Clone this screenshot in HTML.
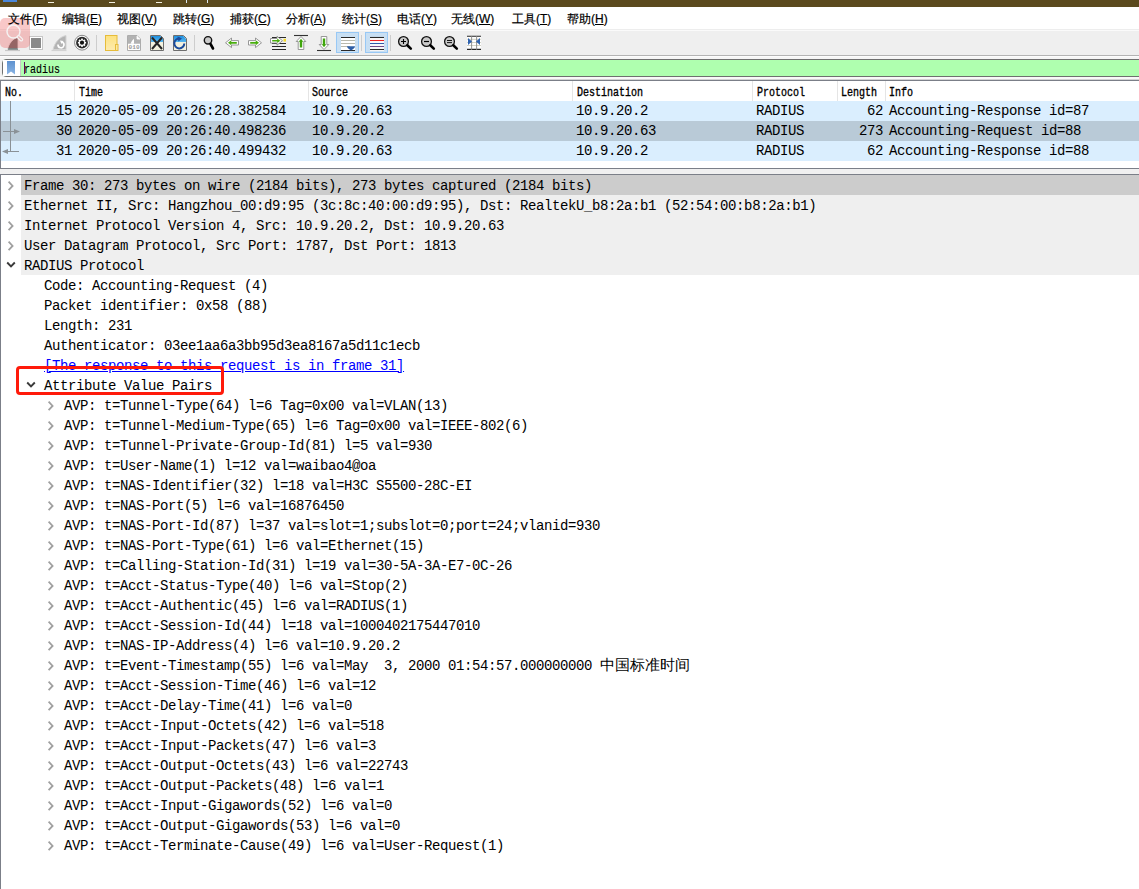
<!DOCTYPE html><html><head><meta charset="utf-8"><style>
*{margin:0;padding:0;box-sizing:border-box}
html,body{width:1139px;height:889px;overflow:hidden;background:#fff}
body{position:relative;font-family:"Liberation Sans", sans-serif}
.a{position:absolute}
.mono{font-family:"Liberation Mono", monospace;font-size:14px;letter-spacing:-0.4px;white-space:pre;color:#000}
.menu{font-family:"Liberation Sans", sans-serif;font-size:12px;color:#000;white-space:pre;z-index:10;-webkit-text-stroke:0.2px #000}
.menu u{text-decoration:underline}
.hdr{font-family:"Liberation Mono", monospace;font-size:12px;white-space:pre;color:#000;transform:scaleX(0.8333);transform-origin:0 0;-webkit-text-stroke:0.35px #000}
.row{position:absolute;height:20px;left:1px;right:0}
.cell{position:absolute;top:0;height:20px;line-height:20px}
</style></head><body><div class="a" style="left:0;top:0;width:1139px;height:7px;background:#5b4a1e"></div>
<div class="a" style="left:3px;top:0;width:14px;height:2px;background:#4a86d8"></div>
<div class="a" style="left:48px;top:2px;width:6px;height:1px;background:#f4f0e0"></div>
<div class="a" style="left:109px;top:2px;width:6px;height:1px;background:#f4f0e0"></div>
<div class="a" style="left:156px;top:2px;width:6px;height:1px;background:#f4f0e0"></div>
<div class="a" style="left:186px;top:0;width:1px;height:3px;background:#dce8f0"></div>
<div class="a" style="left:207px;top:0;width:1px;height:3px;background:#dce8f0"></div>
<div class="a" style="left:0;top:7px;width:1139px;height:22px;background:#fff"></div>
<div class="a menu" style="left:8px;top:11px;height:16px;line-height:16px">文件(<u>F</u>)</div>
<div class="a menu" style="left:62px;top:11px;height:16px;line-height:16px">编辑(<u>E</u>)</div>
<div class="a menu" style="left:117px;top:11px;height:16px;line-height:16px">视图(<u>V</u>)</div>
<div class="a menu" style="left:173px;top:11px;height:16px;line-height:16px">跳转(<u>G</u>)</div>
<div class="a menu" style="left:230px;top:11px;height:16px;line-height:16px">捕获(<u>C</u>)</div>
<div class="a menu" style="left:286px;top:11px;height:16px;line-height:16px">分析(<u>A</u>)</div>
<div class="a menu" style="left:342px;top:11px;height:16px;line-height:16px">统计(<u>S</u>)</div>
<div class="a menu" style="left:397px;top:11px;height:16px;line-height:16px">电话(<u>Y</u>)</div>
<div class="a menu" style="left:451px;top:11px;height:16px;line-height:16px">无线(<u>W</u>)</div>
<div class="a menu" style="left:512px;top:11px;height:16px;line-height:16px">工具(<u>T</u>)</div>
<div class="a menu" style="left:567px;top:11px;height:16px;line-height:16px">帮助(<u>H</u>)</div>
<div class="a" style="left:0;top:29px;width:1139px;height:1px;background:#ededed"></div>
<div class="a" style="left:0;top:30px;width:1139px;height:1px;background:#fafafa"></div>
<div class="a" style="left:0;top:31px;width:1139px;height:24px;background:#efefef"></div>
<div class="a" style="left:0;top:55px;width:1139px;height:1px;background:#b3b3b3"></div>
<svg class="a" style="left:0;top:0" width="500" height="56" viewBox="0 0 500 56">
<defs>
<linearGradient id="gfold" x1="0" y1="0" x2="0" y2="1"><stop offset="0" stop-color="#fde27e"/><stop offset="1" stop-color="#fdebb0"/></linearGradient>
<linearGradient id="gblue" x1="0" y1="0" x2="0" y2="1"><stop offset="0" stop-color="#1c8fe0"/><stop offset="1" stop-color="#5cb8f0"/></linearGradient>
</defs>
<!-- shark fin start (under overlay) -->
<path d="M5 50.5H20" stroke="#c8c8c8" stroke-width="1.2"/>
<path d="M7.5 49.2C9 43.5 12.5 38.8 18 37.2V49.2Z" fill="#5e5e5e" stroke="#e4e4e4" stroke-width="0.8"/><path d="M8 49.3H18" stroke="#7a8686" stroke-width="1"/>
<!-- stop -->
<rect x="29.5" y="36.5" width="13" height="13" fill="#fff" stroke="#c6c6c6"/>
<rect x="31" y="38" width="10" height="10" fill="#8a8a8a"/>
<!-- restart fin -->
<path d="M51.5 50.5H66.5" stroke="#d2d2d2" stroke-width="1.2"/>
<path d="M53 49.5C55 42 59.5 37 66 35.5V49.5Z" fill="#b4b4b4" stroke="#d4d4d4" stroke-width="1"/>
<path d="M58 44.5A3 3 0 1 0 62 42" fill="none" stroke="#fff" stroke-width="1.6"/>
<path d="M60 40.5L63.5 41L61.5 44Z" fill="#fff"/>
<!-- options gear -->
<circle cx="82" cy="42.7" r="7.4" fill="#fff" stroke="#7a7a7a" stroke-width="0.9"/>
<circle cx="82" cy="42.7" r="5.9" fill="#262626"/>
<g fill="#fff"><circle cx="82" cy="42.7" r="3.0"/>
<rect x="81.1" y="38.6" width="1.8" height="8.2"/><rect x="77.9" y="41.8" width="8.2" height="1.8"/>
<rect x="81.1" y="38.6" width="1.8" height="8.2" transform="rotate(45 82 42.7)"/><rect x="81.1" y="38.6" width="1.8" height="8.2" transform="rotate(-45 82 42.7)"/></g>
<circle cx="82" cy="42.7" r="2.1" fill="#111"/>
<!-- sep -->
<rect x="96" y="35" width="1" height="16" fill="#cdcdcd"/>
<!-- folder -->
<rect x="105.5" y="35.5" width="11.5" height="15" fill="url(#gfold)" stroke="#e6bc3a" stroke-width="1"/>
<rect x="115.5" y="44.5" width="2.5" height="6" fill="#fde8a0" stroke="#e6bc3a" stroke-width="1"/>
<!-- 010 file -->
<path d="M127.5 35.5H137L140.5 39V50.5H127.5Z" fill="#fff" stroke="#acacac"/>
<path d="M128 36H136.6L140 39.4V43.8H128Z" fill="#b2b2b2"/>
<path d="M137 36V39H140" fill="#fff" stroke="#fff" stroke-width="0.8"/>
<path d="M130.5 43.8C131.5 41.5 132.5 39.8 134 38.8V43.8Z" fill="#fff"/>
<text x="128.6" y="48.9" font-family="Liberation Mono" font-size="6" fill="#9a9a9a" font-weight="bold" textLength="11" lengthAdjust="spacingAndGlyphs" style="-webkit-font-smoothing:antialiased">010</text>
<!-- close file -->
<path d="M150.5 35.5H160.5L163.5 38.5V50.5H150.5Z" fill="#f3f1df" stroke="#6e6e6e"/>
<path d="M151 36H160.3L163 38.7V42H151Z" fill="url(#gblue)"/>
<path d="M152 37.5L162 49M162 37.5L152 49" stroke="#262626" stroke-width="2"/>
<!-- reload -->
<path d="M173.5 35.5H183.5L186.5 38.5V50.5H173.5Z" fill="#f3f1df" stroke="#6e6e6e"/>
<path d="M174 36H183.3L186 38.7V42H174Z" fill="url(#gblue)"/>
<path d="M180 38.5A5 5 0 1 0 184.3 43.5" fill="none" stroke="#1c4c9c" stroke-width="2"/>
<path d="M177.5 36.5L182 38.5L178.5 41.5Z" fill="#1c4c9c"/>
<!-- sep -->
<rect x="194" y="35" width="1" height="16" fill="#cdcdcd"/>
<!-- find -->
<circle cx="208" cy="40.3" r="3.7" fill="#cacaca" stroke="#111" stroke-width="1.4"/>
<path d="M210.5 44L213 48.5" stroke="#000" stroke-width="2.6" stroke-linecap="round"/>
<!-- prev arrow -->
<path d="M225.5 42.8L231.5 38V40.6H238.5V45H231.5V47.6Z" fill="#fff" stroke="#8c8c8c" stroke-width="0.9" stroke-linejoin="round"/>
<path d="M228 42.8L231.3 40.3V41.9H236.8V43.7H231.3V45.3Z" fill="#4aae0e"/>
<!-- next arrow -->
<path d="M261.5 42.8L255.5 38V40.6H248.5V45H255.5V47.6Z" fill="#fff" stroke="#8c8c8c" stroke-width="0.9" stroke-linejoin="round"/>
<path d="M259 42.8L255.7 40.3V41.9H250.2V43.7H255.7V45.3Z" fill="#4aae0e"/>
<!-- goto packet -->
<g stroke="#2a2a2a" stroke-width="1.1"><path d="M272 37.5H286M272 43.5H286M272 46.5H286M272 49.5H286"/></g>
<rect x="283.5" y="38.8" width="2.5" height="2.8" fill="#f5dc2a"/>
<path d="M282.5 40.7L277 36.3V38.5H270.5V43H277V45.2Z" fill="#fff" stroke="#8c8c8c" stroke-width="0.9" stroke-linejoin="round"/>
<path d="M280.3 40.7L277.2 38.4V39.9H272.2V41.5H277.2V43Z" fill="#4aae0e"/>
<!-- first packet -->
<path d="M294 35.5H308" stroke="#333" stroke-width="1.1"/>
<path d="M301 36.5L305.8 41.5H303.8V49.5H298.2V41.5H296.2Z" fill="#fff" stroke="#8c8c8c" stroke-width="0.9" stroke-linejoin="round"/>
<path d="M301 38.8L303.3 41.8H302.2V47.6H299.8V41.8H298.7Z" fill="#3fa50c"/>
<!-- last packet -->
<path d="M317 50.5H331" stroke="#333" stroke-width="1.1"/>
<path d="M324 49.5L328.8 44.5H326.8V36.5H321.2V44.5H319.2Z" fill="#fff" stroke="#8c8c8c" stroke-width="0.9" stroke-linejoin="round"/>
<path d="M324 47.2L326.3 44.2H325.2V38.4H322.8V44.2H321.7Z" fill="#3fa50c"/>
<!-- autoscroll pressed -->
<rect x="336.5" y="32.5" width="22" height="20" fill="#c8dff3" stroke="#98c8f5"/>
<rect x="341" y="37" width="14" height="14" fill="#fff"/>
<path d="M341 37.5H355M341 50.5H355" stroke="#2a2a2a" stroke-width="1.1"/>
<path d="M341 40.5H355M341 43.5H355M341 46.5H350" stroke="#b9b9ad" stroke-width="1"/>
<path d="M347 46.3H355C355 48 353 49.5 351 50.5C349 49.5 347 48 347 46.3Z" fill="#2f5fa6"/>
<!-- sep -->
<rect x="361" y="35" width="1" height="16" fill="#cdcdcd"/>
<!-- colorize pressed -->
<rect x="365.5" y="32.5" width="22" height="20" fill="#c8dff3" stroke="#98c8f5"/>
<rect x="370" y="37" width="14" height="14" fill="#fff"/>
<path d="M370 37.5H384" stroke="#2a2a2a" stroke-width="1.1"/>
<path d="M370 40.5H384" stroke="#ee2222" stroke-width="1.1"/>
<path d="M370 43.5H384" stroke="#2f5aa8" stroke-width="1.1"/>
<path d="M370 46.5H384" stroke="#6e4a86" stroke-width="1.1"/>
<path d="M370 49.5H384" stroke="#2a2a2a" stroke-width="1.1"/>
<!-- sep -->
<rect x="390" y="35" width="1" height="16" fill="#cdcdcd"/>
<!-- zoom in -->
<circle cx="403.5" cy="41.5" r="4.9" fill="#cacaca" stroke="#111" stroke-width="1.3"/>
<path d="M401 41.5H406M403.5 39V44" stroke="#000" stroke-width="1.1"/>
<path d="M407.3 45.3L410.8 48.6" stroke="#000" stroke-width="2.6" stroke-linecap="round"/>
<!-- zoom out -->
<circle cx="426.5" cy="41.5" r="4.9" fill="#cacaca" stroke="#111" stroke-width="1.3"/>
<path d="M424 41.5H429" stroke="#000" stroke-width="1.2"/>
<path d="M430.3 45.3L433.8 48.6" stroke="#000" stroke-width="2.6" stroke-linecap="round"/>
<!-- normal size -->
<circle cx="449.5" cy="41.5" r="4.9" fill="#cacaca" stroke="#111" stroke-width="1.3"/>
<path d="M447 40.5H452M447 42.6H452" stroke="#000" stroke-width="0.9"/>
<path d="M453.3 45.3L456.8 48.6" stroke="#000" stroke-width="2.6" stroke-linecap="round"/>
<!-- resize columns -->
<rect x="467" y="36" width="14" height="14" fill="#fff"/>
<path d="M467 39.3H481M467 42.5H481M467 45.5H481" stroke="#c6c6b8" stroke-width="0.8"/>
<path d="M467 36.3H481M467 49.4H481" stroke="#262626" stroke-width="1.1"/>
<path d="M471.6 36V50M476.6 36V50" stroke="#888" stroke-width="0.9"/>
<path d="M468 38L472 41.5L468 45Z" fill="#2f63b0"/>
<path d="M480 38L476 41.5L480 45Z" fill="#2f63b0"/>
</svg>
<div class="a" style="left:0;top:56px;width:1139px;height:24px;background:#f0f0f0"></div>
<div class="a" style="left:0;top:56px;width:1139px;height:1px;background:#fcfcfc"></div>
<div class="a" style="left:0;top:57px;width:1139px;height:2px;background:#f5f5f5"></div>
<div class="a" style="left:0;top:77px;width:1139px;height:2px;background:#f9f9f9"></div>
<div class="a" style="left:0;top:79px;width:1139px;height:1px;background:#d2d2d2"></div>
<div class="a" style="left:2px;top:59px;width:1150px;height:18px;border:1px solid #6f6f6f;border-radius:4px;background:#afffaf"></div>
<div class="a" style="left:3px;top:60px;width:18px;height:16px;background:#fff;border-right:1px solid #c8c8c8"></div>
<div class="a hdr" style="left:24px;top:61px;height:18px;line-height:18px;-webkit-text-stroke:0.15px #000">radius</div>
<div class="a" style="left:24px;top:62px;width:1px;height:12px;background:#5a0a5a"></div>
<svg class="a" style="left:0;top:55px" width="24" height="24"><defs><linearGradient id="gbm" x1="0" y1="0" x2="0" y2="1"><stop offset="0" stop-color="#5e92cf"/><stop offset="1" stop-color="#8ab4e4"/></linearGradient></defs><path d="M7 6H15V19.5L11 16.5L7 19.5Z" fill="url(#gbm)"/></svg>
<div class="a" style="left:0;top:80px;width:1139px;height:89px;border-top:1px solid #7b7f88;border-left:1px solid #7b7f88;border-bottom:1px solid #7b7f88;background:#fff"></div>
<div class="a hdr" style="left:5px;top:83px;height:20px;line-height:20px">No.</div>
<div class="a" style="left:74px;top:81px;width:1px;height:20px;background:#e5e5e5"></div>
<div class="a hdr" style="left:79px;top:83px;height:20px;line-height:20px">Time</div>
<div class="a" style="left:308px;top:81px;width:1px;height:20px;background:#e5e5e5"></div>
<div class="a hdr" style="left:312px;top:83px;height:20px;line-height:20px">Source</div>
<div class="a" style="left:572px;top:81px;width:1px;height:20px;background:#e5e5e5"></div>
<div class="a hdr" style="left:577px;top:83px;height:20px;line-height:20px">Destination</div>
<div class="a" style="left:752px;top:81px;width:1px;height:20px;background:#e5e5e5"></div>
<div class="a hdr" style="left:757px;top:83px;height:20px;line-height:20px">Protocol</div>
<div class="a" style="left:837px;top:81px;width:1px;height:20px;background:#e5e5e5"></div>
<div class="a hdr" style="left:841px;top:83px;height:20px;line-height:20px">Length</div>
<div class="a" style="left:885px;top:81px;width:1px;height:20px;background:#e5e5e5"></div>
<div class="a hdr" style="left:889px;top:83px;height:20px;line-height:20px">Info</div>
<div class="a" style="left:1px;top:101px;width:1138px;height:20px;background:#daeefe"></div>
<div class="a mono" style="left:0;top:101px;width:72px;text-align:right;line-height:20px">15</div>
<div class="a mono" style="left:78px;top:101px;line-height:20px">2020-05-09 20:26:28.382584</div>
<div class="a mono" style="left:312px;top:101px;line-height:20px">10.9.20.63</div>
<div class="a mono" style="left:576px;top:101px;line-height:20px">10.9.20.2</div>
<div class="a mono" style="left:756px;top:101px;line-height:20px">RADIUS</div>
<div class="a mono" style="left:800px;top:101px;width:83px;text-align:right;line-height:20px">62</div>
<div class="a mono" style="left:889px;top:101px;line-height:20px">Accounting-Response id=87</div>
<div class="a" style="left:1px;top:121px;width:1138px;height:20px;background:#b9cad7"></div>
<div class="a mono" style="left:0;top:121px;width:72px;text-align:right;line-height:20px">30</div>
<div class="a mono" style="left:78px;top:121px;line-height:20px">2020-05-09 20:26:40.498236</div>
<div class="a mono" style="left:312px;top:121px;line-height:20px">10.9.20.2</div>
<div class="a mono" style="left:576px;top:121px;line-height:20px">10.9.20.63</div>
<div class="a mono" style="left:756px;top:121px;line-height:20px">RADIUS</div>
<div class="a mono" style="left:800px;top:121px;width:83px;text-align:right;line-height:20px">273</div>
<div class="a mono" style="left:889px;top:121px;line-height:20px">Accounting-Request id=88</div>
<div class="a" style="left:1px;top:141px;width:1138px;height:20px;background:#daeefe"></div>
<div class="a mono" style="left:0;top:141px;width:72px;text-align:right;line-height:20px">31</div>
<div class="a mono" style="left:78px;top:141px;line-height:20px">2020-05-09 20:26:40.499432</div>
<div class="a mono" style="left:312px;top:141px;line-height:20px">10.9.20.63</div>
<div class="a mono" style="left:576px;top:141px;line-height:20px">10.9.20.2</div>
<div class="a mono" style="left:756px;top:141px;line-height:20px">RADIUS</div>
<div class="a mono" style="left:800px;top:141px;width:83px;text-align:right;line-height:20px">62</div>
<div class="a mono" style="left:889px;top:141px;line-height:20px">Accounting-Response id=88</div>
<div class="a" style="left:10px;top:101px;width:1px;height:51px;background:#8a9196"></div>
<svg class="a" style="left:0;top:121px" width="24" height="40"><path d="M3 10.5H15" stroke="#8a9196" stroke-width="1"/><path d="M14 8L20 10.5L14 13Z" fill="#8a9196"/><path d="M7 30.5H19" stroke="#8a9196" stroke-width="1"/><path d="M8 28L2 30.5L8 33Z" fill="#8a9196"/></svg>
<div class="a" style="left:0;top:169px;width:1139px;height:5px;background:#f0f0f0"></div>
<div class="a" style="left:0;top:174px;width:1139px;height:715px;border-top:1px solid #7b7f88;border-left:1px solid #7b7f88;background:#fff"></div>
<div class="a" style="left:21px;top:175px;width:1118px;height:20px;background:#cccccc"></div>
<svg class="a" style="left:7px;top:180px" width="8" height="12"><path d="M1.6 1.6L5.6 5.9L1.6 10.2" fill="none" stroke="#a0a0a0" stroke-width="1.8"/></svg>
<div class="a mono" style="left:24px;top:176px;line-height:20px">Frame 30: 273 bytes on wire (2184 bits), 273 bytes captured (2184 bits)</div>
<div class="a" style="left:21px;top:195px;width:1118px;height:20px;background:#efefef"></div>
<svg class="a" style="left:7px;top:200px" width="8" height="12"><path d="M1.6 1.6L5.6 5.9L1.6 10.2" fill="none" stroke="#a0a0a0" stroke-width="1.8"/></svg>
<div class="a mono" style="left:24px;top:196px;line-height:20px">Ethernet II, Src: Hangzhou_00:d9:95 (3c:8c:40:00:d9:95), Dst: RealtekU_b8:2a:b1 (52:54:00:b8:2a:b1)</div>
<div class="a" style="left:21px;top:215px;width:1118px;height:20px;background:#efefef"></div>
<svg class="a" style="left:7px;top:220px" width="8" height="12"><path d="M1.6 1.6L5.6 5.9L1.6 10.2" fill="none" stroke="#a0a0a0" stroke-width="1.8"/></svg>
<div class="a mono" style="left:24px;top:216px;line-height:20px">Internet Protocol Version 4, Src: 10.9.20.2, Dst: 10.9.20.63</div>
<div class="a" style="left:21px;top:235px;width:1118px;height:20px;background:#efefef"></div>
<svg class="a" style="left:7px;top:240px" width="8" height="12"><path d="M1.6 1.6L5.6 5.9L1.6 10.2" fill="none" stroke="#a0a0a0" stroke-width="1.8"/></svg>
<div class="a mono" style="left:24px;top:236px;line-height:20px">User Datagram Protocol, Src Port: 1787, Dst Port: 1813</div>
<div class="a" style="left:21px;top:255px;width:1118px;height:20px;background:#efefef"></div>
<svg class="a" style="left:5.5px;top:261.3px" width="12" height="8"><path d="M1.2 1.5L5 5.3L8.8 1.5" fill="none" stroke="#3a3a3a" stroke-width="1.9"/></svg>
<div class="a mono" style="left:24px;top:256px;line-height:20px">RADIUS Protocol</div>
<div class="a mono" style="left:44px;top:276px;line-height:20px">Code: Accounting-Request (4)</div>
<div class="a mono" style="left:44px;top:296px;line-height:20px">Packet identifier: 0x58 (88)</div>
<div class="a mono" style="left:44px;top:316px;line-height:20px">Length: 231</div>
<div class="a mono" style="left:44px;top:336px;line-height:20px">Authenticator: 03ee1aa6a3bb95d3ea8167a5d11c1ecb</div>
<div class="a mono" style="left:44px;top:356px;line-height:20px;color:#0000ff;text-decoration:underline">[The response to this request is in frame 31]</div>
<svg class="a" style="left:25.5px;top:381.3px" width="12" height="8"><path d="M1.2 1.5L5 5.3L8.8 1.5" fill="none" stroke="#3a3a3a" stroke-width="1.9"/></svg>
<div class="a mono" style="left:44px;top:376px;line-height:20px">Attribute Value Pairs</div>
<svg class="a" style="left:47px;top:400px" width="8" height="12"><path d="M1.6 1.6L5.6 5.9L1.6 10.2" fill="none" stroke="#a0a0a0" stroke-width="1.8"/></svg>
<div class="a mono" style="left:64px;top:396px;line-height:20px">AVP: t=Tunnel-Type(64) l=6 Tag=0x00 val=VLAN(13)</div>
<svg class="a" style="left:47px;top:420px" width="8" height="12"><path d="M1.6 1.6L5.6 5.9L1.6 10.2" fill="none" stroke="#a0a0a0" stroke-width="1.8"/></svg>
<div class="a mono" style="left:64px;top:416px;line-height:20px">AVP: t=Tunnel-Medium-Type(65) l=6 Tag=0x00 val=IEEE-802(6)</div>
<svg class="a" style="left:47px;top:440px" width="8" height="12"><path d="M1.6 1.6L5.6 5.9L1.6 10.2" fill="none" stroke="#a0a0a0" stroke-width="1.8"/></svg>
<div class="a mono" style="left:64px;top:436px;line-height:20px">AVP: t=Tunnel-Private-Group-Id(81) l=5 val=930</div>
<svg class="a" style="left:47px;top:460px" width="8" height="12"><path d="M1.6 1.6L5.6 5.9L1.6 10.2" fill="none" stroke="#a0a0a0" stroke-width="1.8"/></svg>
<div class="a mono" style="left:64px;top:456px;line-height:20px">AVP: t=User-Name(1) l=12 val=waibao4@oa</div>
<svg class="a" style="left:47px;top:480px" width="8" height="12"><path d="M1.6 1.6L5.6 5.9L1.6 10.2" fill="none" stroke="#a0a0a0" stroke-width="1.8"/></svg>
<div class="a mono" style="left:64px;top:476px;line-height:20px">AVP: t=NAS-Identifier(32) l=18 val=H3C S5500-28C-EI</div>
<svg class="a" style="left:47px;top:500px" width="8" height="12"><path d="M1.6 1.6L5.6 5.9L1.6 10.2" fill="none" stroke="#a0a0a0" stroke-width="1.8"/></svg>
<div class="a mono" style="left:64px;top:496px;line-height:20px">AVP: t=NAS-Port(5) l=6 val=16876450</div>
<svg class="a" style="left:47px;top:520px" width="8" height="12"><path d="M1.6 1.6L5.6 5.9L1.6 10.2" fill="none" stroke="#a0a0a0" stroke-width="1.8"/></svg>
<div class="a mono" style="left:64px;top:516px;line-height:20px">AVP: t=NAS-Port-Id(87) l=37 val=slot=1;subslot=0;port=24;vlanid=930</div>
<svg class="a" style="left:47px;top:540px" width="8" height="12"><path d="M1.6 1.6L5.6 5.9L1.6 10.2" fill="none" stroke="#a0a0a0" stroke-width="1.8"/></svg>
<div class="a mono" style="left:64px;top:536px;line-height:20px">AVP: t=NAS-Port-Type(61) l=6 val=Ethernet(15)</div>
<svg class="a" style="left:47px;top:560px" width="8" height="12"><path d="M1.6 1.6L5.6 5.9L1.6 10.2" fill="none" stroke="#a0a0a0" stroke-width="1.8"/></svg>
<div class="a mono" style="left:64px;top:556px;line-height:20px">AVP: t=Calling-Station-Id(31) l=19 val=30-5A-3A-E7-0C-26</div>
<svg class="a" style="left:47px;top:580px" width="8" height="12"><path d="M1.6 1.6L5.6 5.9L1.6 10.2" fill="none" stroke="#a0a0a0" stroke-width="1.8"/></svg>
<div class="a mono" style="left:64px;top:576px;line-height:20px">AVP: t=Acct-Status-Type(40) l=6 val=Stop(2)</div>
<svg class="a" style="left:47px;top:600px" width="8" height="12"><path d="M1.6 1.6L5.6 5.9L1.6 10.2" fill="none" stroke="#a0a0a0" stroke-width="1.8"/></svg>
<div class="a mono" style="left:64px;top:596px;line-height:20px">AVP: t=Acct-Authentic(45) l=6 val=RADIUS(1)</div>
<svg class="a" style="left:47px;top:620px" width="8" height="12"><path d="M1.6 1.6L5.6 5.9L1.6 10.2" fill="none" stroke="#a0a0a0" stroke-width="1.8"/></svg>
<div class="a mono" style="left:64px;top:616px;line-height:20px">AVP: t=Acct-Session-Id(44) l=18 val=1000402175447010</div>
<svg class="a" style="left:47px;top:640px" width="8" height="12"><path d="M1.6 1.6L5.6 5.9L1.6 10.2" fill="none" stroke="#a0a0a0" stroke-width="1.8"/></svg>
<div class="a mono" style="left:64px;top:636px;line-height:20px">AVP: t=NAS-IP-Address(4) l=6 val=10.9.20.2</div>
<svg class="a" style="left:47px;top:660px" width="8" height="12"><path d="M1.6 1.6L5.6 5.9L1.6 10.2" fill="none" stroke="#a0a0a0" stroke-width="1.8"/></svg>
<div class="a mono" style="left:64px;top:656px;line-height:20px">AVP: t=Event-Timestamp(55) l=6 val=May  3, 2000 01:54:57.000000000 <span style="letter-spacing:0;font-size:14.7px">中国标准时间</span></div>
<svg class="a" style="left:47px;top:680px" width="8" height="12"><path d="M1.6 1.6L5.6 5.9L1.6 10.2" fill="none" stroke="#a0a0a0" stroke-width="1.8"/></svg>
<div class="a mono" style="left:64px;top:676px;line-height:20px">AVP: t=Acct-Session-Time(46) l=6 val=12</div>
<svg class="a" style="left:47px;top:700px" width="8" height="12"><path d="M1.6 1.6L5.6 5.9L1.6 10.2" fill="none" stroke="#a0a0a0" stroke-width="1.8"/></svg>
<div class="a mono" style="left:64px;top:696px;line-height:20px">AVP: t=Acct-Delay-Time(41) l=6 val=0</div>
<svg class="a" style="left:47px;top:720px" width="8" height="12"><path d="M1.6 1.6L5.6 5.9L1.6 10.2" fill="none" stroke="#a0a0a0" stroke-width="1.8"/></svg>
<div class="a mono" style="left:64px;top:716px;line-height:20px">AVP: t=Acct-Input-Octets(42) l=6 val=518</div>
<svg class="a" style="left:47px;top:740px" width="8" height="12"><path d="M1.6 1.6L5.6 5.9L1.6 10.2" fill="none" stroke="#a0a0a0" stroke-width="1.8"/></svg>
<div class="a mono" style="left:64px;top:736px;line-height:20px">AVP: t=Acct-Input-Packets(47) l=6 val=3</div>
<svg class="a" style="left:47px;top:760px" width="8" height="12"><path d="M1.6 1.6L5.6 5.9L1.6 10.2" fill="none" stroke="#a0a0a0" stroke-width="1.8"/></svg>
<div class="a mono" style="left:64px;top:756px;line-height:20px">AVP: t=Acct-Output-Octets(43) l=6 val=22743</div>
<svg class="a" style="left:47px;top:780px" width="8" height="12"><path d="M1.6 1.6L5.6 5.9L1.6 10.2" fill="none" stroke="#a0a0a0" stroke-width="1.8"/></svg>
<div class="a mono" style="left:64px;top:776px;line-height:20px">AVP: t=Acct-Output-Packets(48) l=6 val=1</div>
<svg class="a" style="left:47px;top:800px" width="8" height="12"><path d="M1.6 1.6L5.6 5.9L1.6 10.2" fill="none" stroke="#a0a0a0" stroke-width="1.8"/></svg>
<div class="a mono" style="left:64px;top:796px;line-height:20px">AVP: t=Acct-Input-Gigawords(52) l=6 val=0</div>
<svg class="a" style="left:47px;top:820px" width="8" height="12"><path d="M1.6 1.6L5.6 5.9L1.6 10.2" fill="none" stroke="#a0a0a0" stroke-width="1.8"/></svg>
<div class="a mono" style="left:64px;top:816px;line-height:20px">AVP: t=Acct-Output-Gigawords(53) l=6 val=0</div>
<svg class="a" style="left:47px;top:840px" width="8" height="12"><path d="M1.6 1.6L5.6 5.9L1.6 10.2" fill="none" stroke="#a0a0a0" stroke-width="1.8"/></svg>
<div class="a mono" style="left:64px;top:836px;line-height:20px">AVP: t=Acct-Terminate-Cause(49) l=6 val=User-Request(1)</div>
<div class="a" style="left:16px;top:366px;width:208px;height:29px;border:3px solid #ff1a0a;border-radius:4px"></div>
<div class="a" style="left:0;top:18px;width:30px;height:30px;background:rgba(238,110,110,0.38);border-radius:5px;z-index:5"></div>
<svg class="a" style="left:0;top:18px;z-index:6" width="30" height="30"><circle cx="13.5" cy="13.6" r="6.5" fill="none" stroke="#f4f2f2" stroke-width="1.5"/><path d="M18.6 18.9L21.3 21.6" stroke="#f4f2f2" stroke-width="3.8" stroke-linecap="round"/><path d="M18.6 18.9L21.3 21.6" stroke="#ebb8b8" stroke-width="1.4" stroke-linecap="round"/></svg></body></html>
